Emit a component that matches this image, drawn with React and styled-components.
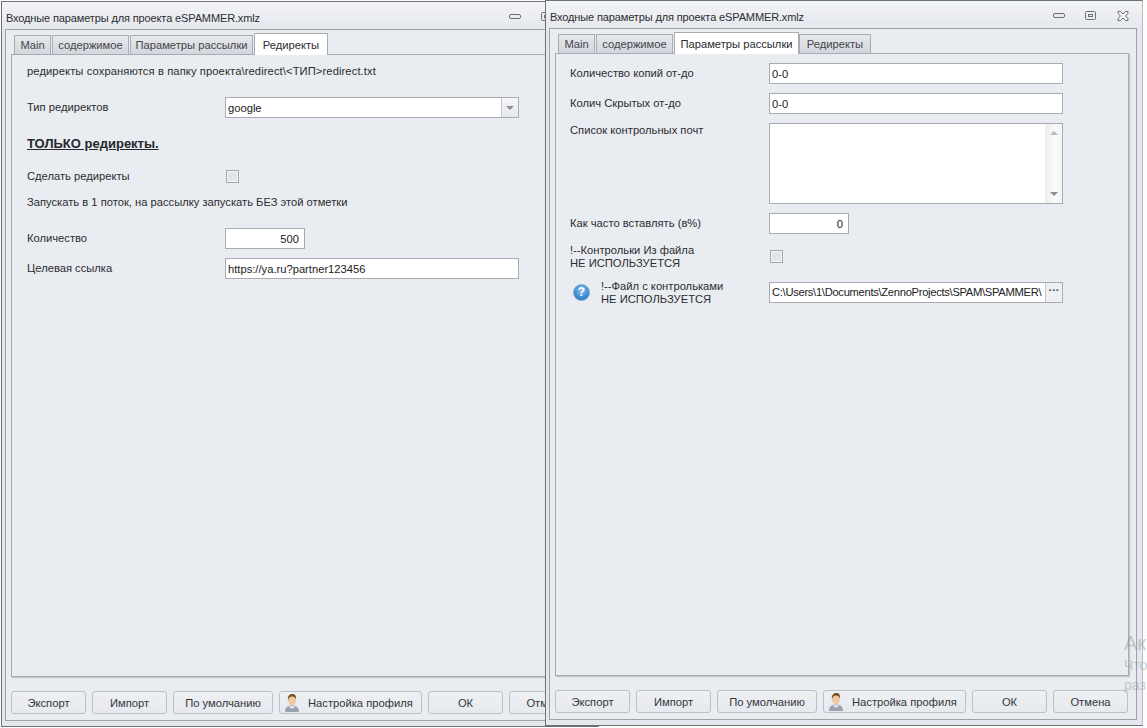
import React from "react";
import styled, { createGlobalStyle } from "styled-components";

const Global = createGlobalStyle`
  html, body { margin: 0; padding: 0; background: #fdfdfd; }
  body { font-family: "Liberation Sans", "Noto Sans", sans-serif; font-size: 11.2px; color: #2b2d30; }
  #root { width: 1147px; height: 728px; }
`;

const Desktop = styled.div`
  position: relative;
  width: 1147px;
  height: 728px;
  overflow: hidden;
`;

const Win = styled.div`
  position: absolute;
  left: ${(p) => p.$x}px;
  top: ${(p) => p.$y}px;
  width: 598px;
  height: 726px;
  box-sizing: border-box;
  display: flex;
  flex-direction: column;
  border: 1px solid #6d7074;
  border-right-color: #b9bcc0;
  background: linear-gradient(#f3f4f6 0, #e4e7ed 28px);
`;

const TitleBar = styled.div`
  height: 27px;
  flex: none;
  display: flex;
  align-items: center;
  padding: 4px 13px 0 4px;
  box-sizing: border-box;
`;

const Title = styled.div`
  flex: 1;
  font-size: 11px;
  letter-spacing: -0.13px;
  white-space: nowrap;
`;

const Controls = styled.div`
  display: flex;
  align-items: center;
  gap: 20px;
  margin-top: -2px;
`;

const Frame = styled.div`
  flex: none;
  margin-left: 3px;
  width: 588px;
  height: 692px;
  box-sizing: border-box;
  border: 1px solid #9ea2a7;
  padding: 3px 7px 0 5px;
  background: #e9ecf1;
  display: flex;
  flex-direction: column;
`;

const TabBar = styled.div`
  display: flex;
  align-items: flex-end;
  height: 22px;
  padding-left: 3px;
  position: relative;
  z-index: 1;
  margin-bottom: -1px;
`;

const Tab = styled.div`
  width: ${(p) => p.$w}px;
  box-sizing: border-box;
  height: ${(p) => (p.$on ? 22 : 20)}px;
  margin-right: ${(p) => p.$gap ?? 1}px;
  display: flex;
  align-items: center;
  justify-content: center;
  white-space: nowrap;
  border: 1px solid #a8acb2;
  border-bottom: ${(p) => (p.$on ? "0" : "1px solid #a8acb2")};
  background: ${(p) => (p.$on ? "#fff" : "linear-gradient(#e6e8ec, #d3d6dc)")};
  color: ${(p) => (p.$on ? "#2b2d30" : "#43464a")};
`;

const Panel = styled.div`
  height: 623px;
  flex: none;
  box-sizing: border-box;
  border: 1px solid #a8acb2;
  box-shadow: 1px 1px 1px rgba(120, 125, 130, 0.35);
  background: #e9ecf1;
  padding: 0 0 0 ${(p) => p.$pad}px;
  display: flex;
  flex-direction: column;
`;

const Row = styled.div`
  display: flex;
  align-items: ${(p) => p.$align || "center"};
  height: ${(p) => p.$h || 20}px;
  margin-top: ${(p) => p.$mt || 0}px;
`;

const Label = styled.div`
  width: ${(p) => p.$w}px;
  flex: none;
  line-height: 13px;
  white-space: nowrap;
  padding-top: ${(p) => p.$top || 0}px;
`;

const Note = styled.div`
  white-space: nowrap;
  letter-spacing: ${(p) => p.$track || 0}px;
`;

const Heading = styled.div`
  font-size: 13px;
  font-weight: 700;
  text-decoration: underline;
  color: #26282b;
  white-space: nowrap;
`;

const Field = styled.div`
  width: ${(p) => p.$w}px;
  height: ${(p) => p.$h || 21}px;
  box-sizing: border-box;
  border: 1px solid #a8acb2;
  background: #fff;
  padding: 0 ${(p) => (p.$right ? 5 : 2)}px;
  display: flex;
  align-items: center;
  justify-content: ${(p) => (p.$right ? "flex-end" : "flex-start")};
  color: #222;
  white-space: nowrap;
  overflow: hidden;
`;

const Combo = styled(Field)`
  padding-right: 0;
  justify-content: space-between;
`;

const FileField = styled(Field)`
  padding-right: 0;
`;

const ComboBtn = styled.div`
  width: 16px;
  height: 100%;
  flex: none;
  border-left: 1px solid #c4c7cc;
  background: linear-gradient(#f6f7f9, #e6e8ec);
  display: flex;
  align-items: center;
  justify-content: center;
`;

const Arrow = styled.span`
  width: 0;
  height: 0;
  border-left: 4px solid transparent;
  border-right: 4px solid transparent;
  border-top: ${(p) => (p.$up ? "0" : "4px solid #8b8e93")};
  border-bottom: ${(p) => (p.$up ? "4px solid #b5b8bc" : "0")};
`;

const FileText = styled.div`
  flex: 1;
  min-width: 0;
  overflow: hidden;
  white-space: nowrap;
  letter-spacing: -0.3px;
`;

const DotsBtn = styled.div`
  width: 17px;
  height: 100%;
  flex: none;
  border-left: 1px solid #c4c7cc;
  background: #eef0f3;
  display: flex;
  align-items: center;
  justify-content: center;
  font-weight: 700;
  font-size: 11px;
  line-height: 1;
  padding-bottom: 3px;
  box-sizing: border-box;
  color: #444;
`;

const TextArea = styled.div`
  width: 294px;
  height: 81px;
  box-sizing: border-box;
  border: 1px solid #a8acb2;
  background: #fff;
  display: flex;
  justify-content: flex-end;
`;

const ScrollBar = styled.div`
  width: 17px;
  background: linear-gradient(90deg, #eeeeee, #fafafa 60%, #f4f4f4);
  display: flex;
  flex-direction: column;
  align-items: center;
  justify-content: space-between;
  padding: 7px 0;
  box-sizing: border-box;
`;

const Check = styled.div`
  width: 13px;
  height: 13px;
  margin-left: 1px;
  box-sizing: border-box;
  border: 1px solid #a3a6aa;
  box-shadow: inset 0 0 0 1px #f4f5f7;
  background: #e3e5e9;
`;

const HelpLabel = styled.div`
  display: flex;
  align-items: center;
`;

const HelpIcon = styled.div`
  width: 17px;
  height: 17px;
  border-radius: 50%;
  margin: 0 11px 0 3px;
  flex: none;
  background: radial-gradient(circle at 50% 35%, #8cc1ee, #2c7cc8 75%);
  border: 1px solid #7aa9d6;
  box-sizing: border-box;
  color: #fff;
  font-weight: 700;
  font-size: 12px;
  display: flex;
  align-items: center;
  justify-content: center;
`;

const Footer = styled.div`
  display: flex;
  gap: 6px;
  margin-top: 14px;
  white-space: nowrap;
`;

const Btn = styled.div`
  width: ${(p) => p.$w}px;
  height: 23px;
  flex: none;
  box-sizing: border-box;
  border: 1px solid #bcc0c6;
  border-radius: 3px;
  background: linear-gradient(#eef0f3, #e6e9ee);
  display: flex;
  align-items: center;
  justify-content: center;
  color: #33363a;
`;

const ProfileBtn = styled(Btn)`
  justify-content: flex-start;
  padding-left: 3px;
  gap: 7px;
`;

const Watermark = styled.div`
  position: absolute;
  left: ${(p) => p.$x}px;
  top: ${(p) => p.$y}px;
  font-size: ${(p) => p.$s}px;
  line-height: 1;
  color: rgba(130, 135, 140, 0.4);
  white-space: nowrap;
`;

const MinIcon = () => (
  <svg width="12" height="6" viewBox="0 0 12 6" fill="none" stroke="#6b6e72">
    <rect x="0.5" y="0.5" width="11" height="4" rx="1.5" />
  </svg>
);
const MaxIcon = () => (
  <svg width="12" height="10" viewBox="0 0 12 10" fill="none" stroke="#6b6e72">
    <rect x="0.5" y="0.5" width="10" height="8" rx="1" />
    <rect x="3.5" y="3.5" width="4" height="2" />
  </svg>
);
const CloseIcon = () => (
  <svg width="12" height="10" viewBox="0 0 12 10" fill="#f1f2f4" stroke="#6b6e72">
    <path d="M1 .5h2.5L6 3l2.5-2.5H11v1.7L8.6 5 11 7.8v1.7H8.5L6 7 3.5 9.5H1V7.8L3.4 5 1 2.2z" />
  </svg>
);
const UserIcon = () => (
  <svg width="18" height="18" viewBox="0 0 18 18">
    <path d="M2 18c0-5 3-6.500 7-6.500s7 1.500 7 6.500z" fill="#9aa3b2" />
    <path d="M6 11.800c1.500 1 4.500 1 6 0l-1.500 2.500h-3z" fill="#eef1f5" />
    <ellipse cx="9" cy="6" rx="4" ry="5.500" fill="#eec9a4" />
    <path d="M5 6.500C4.200 1.500 7 0 9.500 0s4 2 3.500 5.500c-.5-1.800-2-3-4-3S5.500 4 5 6.500z" fill="#7b4f24" />
  </svg>
);

const Shell = ({ x, y, active, children }) => {
  const tabs = [
    ["Main", 37, 1],
    ["содержимое", 77, 1],
    ["Параметры рассылки", active === 2 ? 125 : 123, active === 2 ? 0 : 1],
    ["Редиректы", active === 3 ? 74 : 72, 0],
  ];
  return (
    <Win $x={x} $y={y}>
      <TitleBar>
        <Title>Входные параметры для проекта eSPAMMER.xmlz</Title>
        <Controls>
          <MinIcon />
          <MaxIcon />
          <CloseIcon />
        </Controls>
      </TitleBar>
      <Frame>
        <TabBar>
          {tabs.map(([t, w, g], i) => (
            <Tab key={t} $w={w} $gap={g} $on={i === active}>
              {t}
            </Tab>
          ))}
        </TabBar>
        {children}
        <Footer>
          <Btn $w={75}>Экспорт</Btn>
          <Btn $w={75}>Импорт</Btn>
          <Btn $w={100}>По умолчанию</Btn>
          <ProfileBtn $w={143}>
            <UserIcon />
            Настройка профиля
          </ProfileBtn>
          <Btn $w={75}>ОК</Btn>
          <Btn $w={75}>Отмена</Btn>
        </Footer>
      </Frame>
    </Win>
  );
};

const RedirectsTab = () => (
  <Panel $pad={15}>
    <Row $mt={6}>
      <Note $track={0.1}>редиректы сохраняются в папку проекта\redirect\&lt;ТИП&gt;redirect.txt</Note>
    </Row>
    <Row $mt={16} $h={21}>
      <Label $w={198}>Тип редиректов</Label>
      <Combo $w={294}>
        google
        <ComboBtn>
          <Arrow />
        </ComboBtn>
      </Combo>
    </Row>
    <Row $mt={15}>
      <Heading>ТОЛЬКО редиректы.</Heading>
    </Row>
    <Row $mt={13}>
      <Label $w={198}>Сделать редиректы</Label>
      <Check />
    </Row>
    <Row $mt={6}>
      <Note>Запускать в 1 поток, на рассылку запускать БЕЗ этой отметки</Note>
    </Row>
    <Row $mt={16} $h={21}>
      <Label $w={198}>Количество</Label>
      <Field $w={80} $right>
        500
      </Field>
    </Row>
    <Row $mt={9} $h={21}>
      <Label $w={198}>Целевая ссылка</Label>
      <Field $w={294}>https://ya.ru?partner123456</Field>
    </Row>
  </Panel>
);

const MailingTab = () => (
  <Panel $pad={14}>
    <Row $mt={9} $h={21}>
      <Label $w={199}>Количество копий от-до</Label>
      <Field $w={294}>0-0</Field>
    </Row>
    <Row $mt={9} $h={21}>
      <Label $w={199}>Колич Скрытых от-до</Label>
      <Field $w={294}>0-0</Field>
    </Row>
    <Row $mt={9} $h={81} $align="flex-start">
      <Label $w={199} $top={1}>
        Список контрольных почт
      </Label>
      <TextArea>
        <ScrollBar>
          <Arrow $up />
          <Arrow />
        </ScrollBar>
      </TextArea>
    </Row>
    <Row $mt={9} $h={21}>
      <Label $w={199}>Как часто вставлять (в%)</Label>
      <Field $w={80} $right>
        0
      </Field>
    </Row>
    <Row $mt={9} $h={26}>
      <Label $w={199} $top={2}>
        !--Контрольки Из файла
        <br />
        НЕ ИСПОЛЬЗУЕТСЯ
      </Label>
      <Check />
    </Row>
    <Row $mt={10} $h={26}>
      <HelpLabel>
        <HelpIcon>?</HelpIcon>
        <Label $w={168} $top={2}>
          !--Файл с контрольками
          <br />
          НЕ ИСПОЛЬЗУЕТСЯ
        </Label>
      </HelpLabel>
      <FileField $w={294}>
        <FileText>C:\Users\1\Documents\ZennoProjects\SPAM\SPAMMER\</FileText>
        <DotsBtn>···</DotsBtn>
      </FileField>
    </Row>
  </Panel>
);

export default function App() {
  return (
    <Desktop>
      <Global />
      <Shell x={1} y={1} active={3}>
        <RedirectsTab />
      </Shell>
      <Shell x={545} y={0} active={2}>
        <MailingTab />
      </Shell>
      <Watermark $x={1124} $y={633} $s={20}>Ак</Watermark>
      <Watermark $x={1124} $y={658} $s={14}>Что</Watermark>
      <Watermark $x={1124} $y={678} $s={14}>раз</Watermark>
    </Desktop>
  );
}
